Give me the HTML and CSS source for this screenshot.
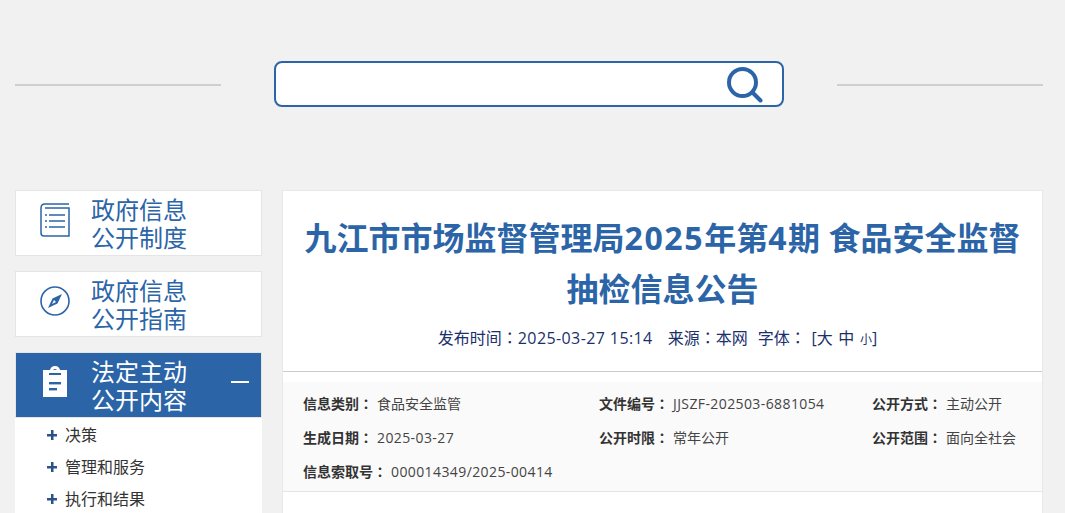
FILE: index.html
```html
<!DOCTYPE html>
<html>
<head>
  <meta charset="utf-8">
  <link rel="stylesheet" href="styles.css">
</head>
<body>
  <div class="top">
    <div class="top-line"></div>
    <div class="search">
      <svg class="search-icon" width="36" height="36" viewBox="0 0 36 36">
        <circle cx="15.5" cy="15.5" r="13.5" fill="none" stroke="#2b65a7" stroke-width="4"/>
        <path d="M25.5 25.5 L33.5 33.5" stroke="#2b65a7" stroke-width="4" stroke-linecap="round"/>
      </svg>
    </div>
    <div class="top-line"></div>
  </div>

  <div class="wrap">
    <div class="side">
      <div class="side-card">
        <svg class="side-icon" width="30" height="34" viewBox="0 0 30 34" fill="none" stroke="#2b65a7" stroke-width="1.5">
          <path d="M29 1 H5 Q1 1 1 5 V30 Q1 33 4 33 H29 V5 H5"/>
          <path d="M9 12 H25 M9 18 H25 M9 24 H25" stroke-width="1.6"/>
          <path d="M5 12 H7 M5 18 H7 M5 24 H7" stroke-width="1.6"/>
        </svg>
        <div class="side-text">政府信息<br>公开制度</div>
      </div>
      <div class="side-card">
        <svg class="side-icon" width="30" height="30" viewBox="0 0 30 30">
          <circle cx="15" cy="15" r="14" fill="none" stroke="#2b65a7" stroke-width="1.6"/>
          <path d="M22 8 L17.5 17.5 L8 22 L12.5 12.5 Z M14 14 L12 18 L16 16 Z" fill="#2b65a7" fill-rule="evenodd"/>
        </svg>
        <div class="side-text">政府信息<br>公开指南</div>
      </div>
      <div class="side-card active">
        <svg class="side-icon" width="26" height="32" viewBox="0 0 26 32">
          <path d="M1 4 H8 Q9 0 13 0 Q17 0 18 4 H25 V31 H1 Z" fill="#fff"/>
          <path d="M11 4 Q13 2 15 4 Z" fill="#2b65a7"/>
          <rect x="7" y="7" width="12" height="2" fill="#2b65a7"/>
          <rect x="7" y="16" width="12" height="2.4" fill="#2b65a7"/>
          <rect x="7" y="22" width="8" height="2.4" fill="#2b65a7"/>
        </svg>
        <div class="side-text">法定主动<br>公开内容</div>
        <div class="side-minus"></div>
      </div>
      <ul class="side-list">
        <li><span class="plus"></span>决策</li>
        <li><span class="plus"></span>管理和服务</li>
        <li><span class="plus"></span>执行和结果</li>
      </ul>
    </div>

    <div class="main">
      <div class="head">
        <h1>九江市市场监督管理局<span class="num">2025</span>年第<span class="num">4</span>期 食品安全监督抽检信息公告</h1>
        <div class="meta">
          <span>发布时间<i class="colon">：</i><span class="num">2025-03-27 15:14</span></span>
          <span>来源<i class="colon">：</i>本网</span>
          <span class="font-size">字体<i class="colon">：</i> [<span>大</span> <span>中</span> <span class="size-s">小</span>]</span>
        </div>
      </div>
      <div class="info">
        <div class="info-row">
          <div class="info-item col-1"><b>信息类别<i class="colon">：</i></b>食品安全监管</div>
          <div class="info-item col-2"><b>文件编号<i class="colon">：</i></b><span class="num">JJSZF-202503-6881054</span></div>
          <div class="info-item"><b>公开方式<i class="colon">：</i></b>主动公开</div>
        </div>
        <div class="info-row">
          <div class="info-item col-1"><b>生成日期<i class="colon">：</i></b><span class="num">2025-03-27</span></div>
          <div class="info-item col-2"><b>公开时限<i class="colon">：</i></b>常年公开</div>
          <div class="info-item"><b>公开范围<i class="colon">：</i></b>面向全社会</div>
        </div>
        <div class="info-row">
          <div class="info-item"><b>信息索取号<i class="colon">：</i></b><span class="num">000014349/2025-00414</span></div>
        </div>
      </div>
    </div>
  </div>
</body>
</html>
```

FILE: styles.css
```css
html, body {
  height: 513px;
  overflow: hidden;
}

body {
  margin: 0;
  background: #f1f1f1;
  font-family: "Open Sans", "Noto Sans CJK SC", sans-serif;
  color: #333;
}

.top {
  display: flex;
  align-items: center;
  justify-content: space-between;
  padding: 61px 22px 83px 15px;
}

.top-line {
  width: 206px;
  height: 2px;
  margin-top: 2px;
  background: #cfcfcf;
}

.search {
  width: 510px;
  height: 46px;
  box-sizing: border-box;
  border: 2px solid #2b65a7;
  border-radius: 8px;
  background: #fff;
  display: flex;
  align-items: center;
  justify-content: flex-end;
  padding-right: 19px;
}

.search-icon {
  margin-top: 2px;
}

.wrap {
  display: flex;
  gap: 20px;
  padding-left: 15px;
}

.side {
  width: 247px;
}

.side-card {
  height: 64px;
  border: 1px solid #e5e5e5;
  background: #fff;
  margin-bottom: 15px;
  display: flex;
  align-items: center;
  padding-left: 24px;
  position: relative;
  color: #2b65a7;
  font-size: 24px;
  line-height: 28px;
}

.side-icon {
  width: 30px;
  flex: none;
  margin-top: -6px;
}

.side-text {
  margin-left: 21px;
  padding-top: 1px;
}

.side-card.active {
  background: #2b65a7;
  border-color: #e5e5e5;
  color: #fff;
  margin-bottom: 0;
}

.side-minus {
  position: absolute;
  right: 12px;
  top: 28px;
  width: 18px;
  height: 2px;
  background: #fff;
}

.side-list {
  list-style: none;
  margin: 0;
  padding: 1px 0 0 32px;
  background: #fff;
  font-size: 16px;
  line-height: 32px;
  color: #333;
}

.side-list li {
  display: flex;
  align-items: center;
}

.plus {
  width: 10px;
  height: 10px;
  margin-right: 8px;
  background:
    linear-gradient(#2a5288, #2a5288) center / 10px 2.5px no-repeat,
    linear-gradient(#2a5288, #2a5288) center / 2.5px 10px no-repeat;
}

.main {
  width: 761px;
  background: #fff;
  border: 1px solid #e8e8e8;
  box-sizing: border-box;
}

.head {
  padding: 21px 20px 0;
  height: 181px;
  box-sizing: border-box;
  border-bottom: 1px solid #ccc;
  text-align: center;
}

.head h1 {
  margin: 0;
  font-size: 32px;
  line-height: 51px;
  font-weight: 700;
  color: #2b65a7;
}

.head h1 .num {
  letter-spacing: 1.6px;
}

.meta {
  margin-top: 11px;
  padding-right: 10px;
  font-size: 16px;
  line-height: 24px;
  color: #1b2f6b;
  display: flex;
  justify-content: center;
  gap: 15px;
}

.meta .num {
  letter-spacing: .4px;
}

.font-size {
  margin-left: -5px;
  word-spacing: 1.5px;
}

.colon {
  font-style: normal;
  font-family: "Noto Sans CJK TC", sans-serif;
}

.size-s { font-size: 12px; }

.info {
  margin-top: 10px;
  padding: 4px 20px 3px;
  background: #fafafa;
  border-bottom: 1px solid #e5e5e5;
  font-size: 14px;
  color: #444;
}

.info-row {
  display: flex;
  height: 34px;
  align-items: center;
}

.info .num {
  letter-spacing: .4px;
}

.info-item b {
  color: #333;
  margin-right: 4px;
}

.col-1 { width: 296px; }
.col-2 { width: 273px; }
```
